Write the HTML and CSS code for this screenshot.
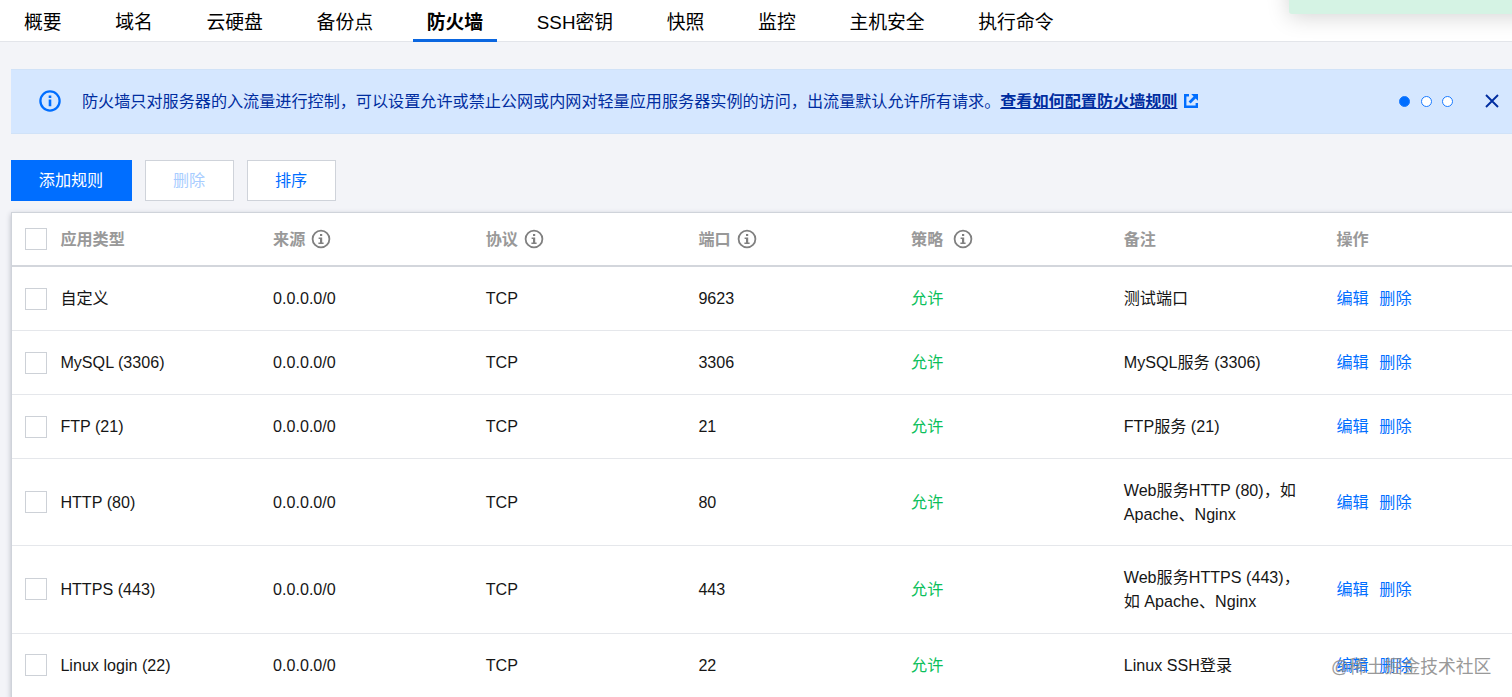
FILE: index.html
```html
<!DOCTYPE html>
<html lang="zh-CN">
  <head>
    <meta charset="UTF-8" />
    <meta name="viewport" content="width=device-width, initial-scale=1.0" />
    <title>防火墙</title>
    <link rel="stylesheet" href="styles.css">
  </head>
  <body>
    <svg class="defs">
      <symbol id="info" viewBox="0 0 20 20">
        <circle cx="10" cy="10" r="8.4" fill="none" stroke="currentColor" stroke-width="1.8" />
        <path d="M9 5h2.2v2H9zM7.6 8.4h3.6v5h1.4V15H7.4v-1.6H9V10H7.6z" fill="currentColor" />
      </symbol>
    </svg>

    <nav class="tabs">
      <a class="tab">概要</a>
      <a class="tab">域名</a>
      <a class="tab">云硬盘</a>
      <a class="tab">备份点</a>
      <a class="tab active">防火墙</a>
      <a class="tab">SSH密钥</a>
      <a class="tab">快照</a>
      <a class="tab">监控</a>
      <a class="tab">主机安全</a>
      <a class="tab">执行命令</a>
    </nav>
    <div class="toast"></div>

    <main class="content">
      <div class="notice">
        <svg class="notice-icon" viewBox="0 0 22 22">
          <circle cx="11" cy="11" r="9.6" fill="none" stroke="#006eff" stroke-width="2.3" />
          <path d="M9.7 5.6h2.6v2.5H9.7zM9.7 9.5h2.6v6.8H9.7z" fill="#006eff" />
        </svg>
        <p class="notice-text">防火墙只对服务器的入流量进行控制，可以设置允许或禁止公网或内网对轻量应用服务器实例的访问，出流量默认允许所有请求。<a class="notice-link">查看如何配置防火墙规则</a></p>
        <svg class="link-icon" viewBox="0 0 14 14">
          <path d="M5 1.2H1.2v11.6h11.6V9" fill="none" stroke="#006eff" stroke-width="2.4" />
          <path d="M7.2 0H14v6.8l-2.4-2.4-5 5L4.6 7.4l5-5z" fill="#006eff" />
        </svg>
        <div class="dots">
          <span class="dot on"></span>
          <span class="dot"></span>
          <span class="dot"></span>
        </div>
        <svg class="close" viewBox="0 0 14 14">
          <path d="M1 1l12 12M13 1L1 13" stroke="#002da0" stroke-width="1.9" />
        </svg>
      </div>

      <div class="actions">
        <button class="btn primary">添加规则</button>
        <button class="btn disabled">删除</button>
        <button class="btn">排序</button>
      </div>

      <div class="panel">
        <table class="rules">
          <thead>
            <tr>
              <th class="check"><span class="box"></span></th>
              <th>应用类型</th>
              <th>来源<svg class="info"><use href="#info" /></svg></th>
              <th>协议<svg class="info"><use href="#info" /></svg></th>
              <th>端口<svg class="info"><use href="#info" /></svg></th>
              <th>策略<svg class="info wide"><use href="#info" /></svg></th>
              <th>备注</th>
              <th>操作</th>
            </tr>
          </thead>
          <tbody>
            <tr>
              <td class="check"><span class="box"></span></td>
              <td>自定义</td>
              <td>0.0.0.0/0</td>
              <td>TCP</td>
              <td>9623</td>
              <td class="allow">允许</td>
              <td>测试端口</td>
              <td><a class="op">编辑</a><a class="op">删除</a></td>
            </tr>
            <tr>
              <td class="check"><span class="box"></span></td>
              <td>MySQL (3306)</td>
              <td>0.0.0.0/0</td>
              <td>TCP</td>
              <td>3306</td>
              <td class="allow">允许</td>
              <td>MySQL服务 (3306)</td>
              <td><a class="op">编辑</a><a class="op">删除</a></td>
            </tr>
            <tr>
              <td class="check"><span class="box"></span></td>
              <td>FTP (21)</td>
              <td>0.0.0.0/0</td>
              <td>TCP</td>
              <td>21</td>
              <td class="allow">允许</td>
              <td>FTP服务 (21)</td>
              <td><a class="op">编辑</a><a class="op">删除</a></td>
            </tr>
            <tr class="tall">
              <td class="check"><span class="box"></span></td>
              <td>HTTP (80)</td>
              <td>0.0.0.0/0</td>
              <td>TCP</td>
              <td>80</td>
              <td class="allow">允许</td>
              <td>Web服务HTTP (80)，如 Apache、Nginx</td>
              <td><a class="op">编辑</a><a class="op">删除</a></td>
            </tr>
            <tr class="tall">
              <td class="check"><span class="box"></span></td>
              <td>HTTPS (443)</td>
              <td>0.0.0.0/0</td>
              <td>TCP</td>
              <td>443</td>
              <td class="allow">允许</td>
              <td>Web服务HTTPS (443)，如 Apache、Nginx</td>
              <td><a class="op">编辑</a><a class="op">删除</a></td>
            </tr>
            <tr>
              <td class="check"><span class="box"></span></td>
              <td>Linux login (22)</td>
              <td>0.0.0.0/0</td>
              <td>TCP</td>
              <td>22</td>
              <td class="allow">允许</td>
              <td>Linux SSH登录</td>
              <td><a class="op">编辑</a><a class="op">删除</a></td>
            </tr>
          </tbody>
        </table>
      </div>
    </main>
    <div class="watermark">@稀土掘金技术社区</div>
  </body>
</html>
```

FILE: styles.css
```css
* {
  box-sizing: border-box;
}
body {
  margin: 0;
  height: 697px;
  overflow: hidden;
  position: relative;
  background: #f3f4f8;
  color: #161616;
  font-family: "Liberation Sans", "Noto Sans CJK SC", sans-serif;
  font-size: 16.12px;
  line-height: 24.2px;
}
.defs {
  display: none;
}
.tabs {
  display: flex;
  gap: 26.9px;
  height: 42px;
  padding-left: 10.5px;
  background: #fff;
  border-bottom: 1px solid #e3e5ea;
  font-size: 18.82px;
  line-height: 45px;
  color: #000;
}
.tab {
  height: 42px;
  padding: 0 13.4px;
  white-space: nowrap;
}
.tab.active {
  font-weight: bold;
  border-bottom: 3px solid #0a66e0;
}
.toast {
  position: absolute;
  top: -40px;
  left: 1289px;
  width: 260px;
  height: 54px;
  border-radius: 3px;
  background: #d5f3e4;
  box-shadow: 0 3px 22px rgba(0, 0, 0, 0.17);
}
.content {
  padding: 27px 0 0 11px;
}
.notice {
  display: flex;
  align-items: center;
  height: 65px;
  padding: 0 13px 1px 28px;
  background: #d5e7ff;
  border: 1px solid #d0e2f8;
  border-width: 1px 0;
  color: #002da0;
}
.notice-icon {
  width: 22px;
  height: 22px;
  margin-right: 21px;
}
.notice-text {
  margin: 0;
  white-space: nowrap;
}
.notice-link {
  font-weight: bold;
  text-decoration: underline;
}
.link-icon {
  width: 14px;
  height: 14px;
  margin-left: 6.5px;
}
.dots {
  display: flex;
  gap: 10.5px;
  margin-left: auto;
}
.dot {
  width: 11px;
  height: 11px;
  border: 1.5px solid #1a7bff;
  border-radius: 50%;
  background: #fff;
}
.dot.on {
  background: #006eff;
}
.close {
  width: 14px;
  height: 14px;
  margin-left: 32px;
}
.actions {
  display: flex;
  gap: 13px;
  margin: 26px 0 11px;
}
.btn {
  width: 89px;
  height: 41px;
  padding: 0 1px 0 0;
  border: 1px solid #cfd3da;
  background: #fff;
  color: #006eff;
  font: inherit;
}
.btn.primary {
  width: 121px;
  border-color: #006eff;
  background: #006eff;
  color: #fff;
}
.btn.disabled {
  color: #a8cdff;
}
.panel {
  width: 1560px;
  border: 1px solid #cfd3da;
  background: #fff;
  box-shadow: 0 2px 5px rgba(54, 58, 80, 0.32);
}
.rules {
  width: 1537.2px;
  table-layout: fixed;
  border-collapse: separate;
  border-spacing: 0;
}
.rules th,
.rules td {
  height: 64px;
  padding: 0 26px 0 0;
  border-bottom: 1px solid #e5e7eb;
  text-align: left;
  vertical-align: middle;
}
.rules th {
  height: 54px;
  border-bottom: 2px solid #d3d6dc;
  color: #999;
  white-space: nowrap;
}
.rules .tall td {
  height: 87.3px;
}
.rules .check {
  width: 48.4px;
  padding: 0 0 0 13px;
}
.box {
  display: block;
  width: 22px;
  height: 22px;
  border: 1px solid #cdd1d7;
  background: #fff;
}
.info {
  width: 20px;
  height: 20px;
  margin-left: 6px;
  vertical-align: -4px;
  color: #808080;
}
.info.wide {
  margin-left: 10px;
}
.rules .allow {
  color: #0abf5b;
}
.op {
  margin-right: 10.7px;
  color: #006eff;
}
.watermark {
  position: absolute;
  top: 655px;
  left: 1331px;
  color: #888;
  font-size: 17.8px;
  white-space: nowrap;
  opacity: 0.85;
}
```
